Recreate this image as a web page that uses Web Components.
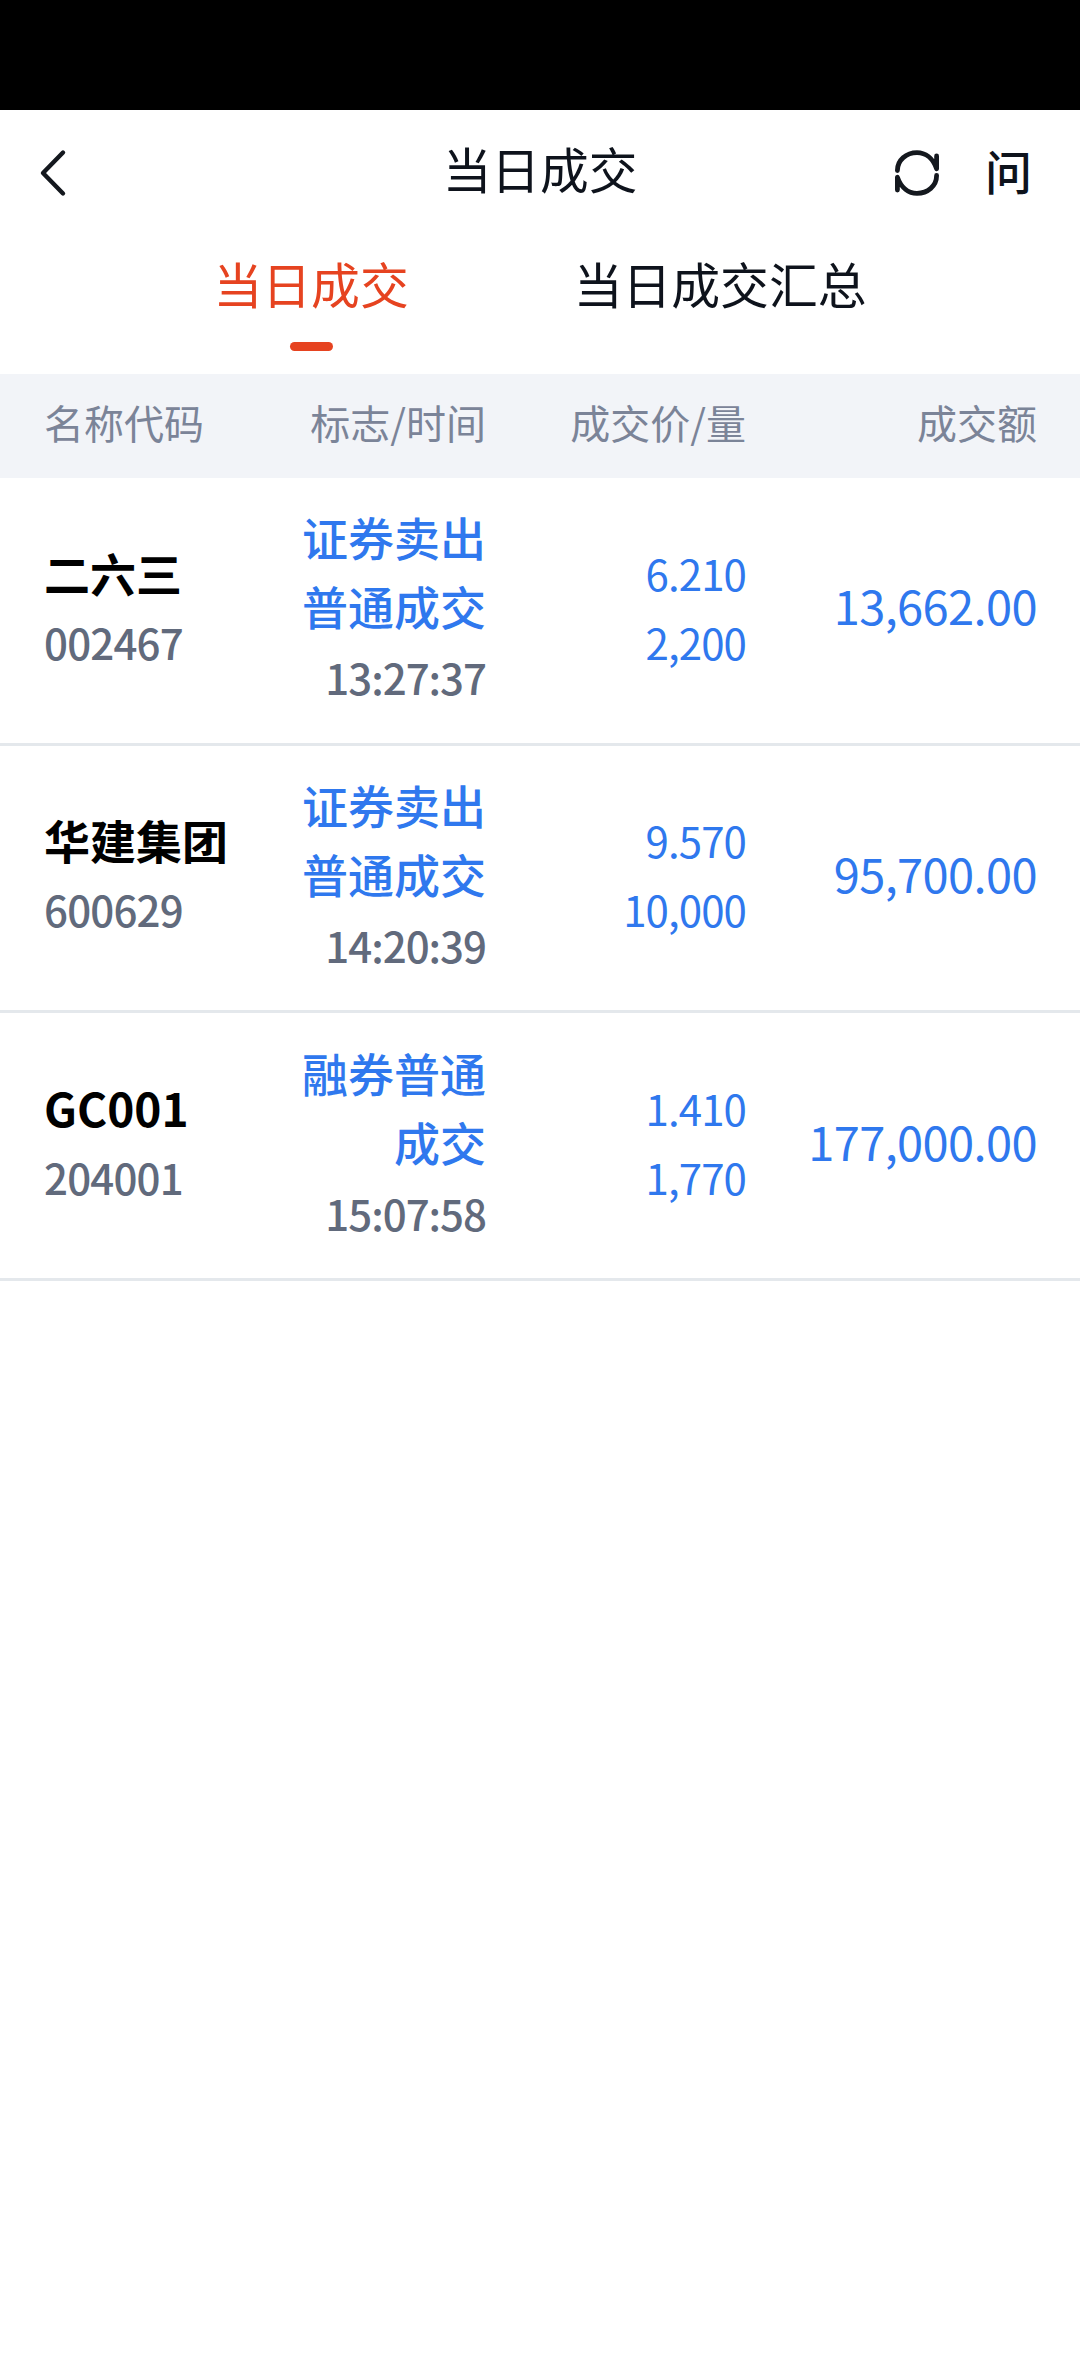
<!DOCTYPE html>
<html lang="zh-CN">
<head>
<meta charset="utf-8">
<title>当日成交</title>
<style>
  body {
    margin: 0;
    min-height: 2376px;
    background: #ffffff;
    color: #0e131c;
    font-family: "Noto Sans CJK SC", sans-serif;
    --brand: #e64320;
    --sell: #2f78ee;
    --muted: #7b8498;
    --code: #616a7c;
    --columns: 241px 201px 260px 291px;
  }
</style>
</head>
<body>

<status-bar></status-bar>

<nav-bar>
  当日成交
  <span slot="action">问</span>
</nav-bar>

<tab-bar>
  <tab-item active>当日成交</tab-item>
  <tab-item>当日成交汇总</tab-item>
</tab-bar>

<trade-list></trade-list>

<script>
/**
 * Status bar area
 */
class StatusBar extends HTMLElement {

  constructor() {
    super();
    this.attachShadow({mode: 'open'}).innerHTML = `
      <style>
        :host { display: block; height: 109.5px; background: #000000; }
      </style>
    `;
  }

}

/**
 * Title bar: back, title, refresh and a slotted action
 */
class NavBar extends HTMLElement {

  constructor() {
    super();
    this.attachShadow({mode: 'open'}).innerHTML = `
      <style>
        :host {
          display: grid;
          grid-template-columns: 1fr auto 1fr;
          align-items: center;
          height: 127px;
          padding: 0 48px 0 37px;
          box-sizing: border-box;
        }
        svg {
          display: block;
          fill: none;
          stroke: #14181e;
          stroke-width: 4.4;
          stroke-linecap: round;
          stroke-linejoin: round;
        }
        .refresh { stroke-width: 4.8; }
        h1 {
          margin: 0 0 11px 11px;
          font-size: 48.7px;
          line-height: 70px;
          font-weight: 400;
        }
        .actions {
          display: flex;
          justify-content: flex-end;
          align-items: center;
          gap: 44px;
        }
        ::slotted([slot=action]) {
          display: block;
          margin-bottom: 6px;
          font-size: 47px;
          line-height: 48px;
          font-weight: 500;
        }
      </style>
      <svg width="32" height="50" viewBox="0 0 32 50"><path d="M26 4.5 6 25l20 20.500"/></svg>
      <h1><slot></slot></h1>
      <div class="actions">
        <svg class="refresh" width="48" height="50" viewBox="0 0 48 50">
          <path d="M4.400 22.500C4.400 12 13.400 4.700 24 4.700c8.200 0 15.800 5.300 19.600 16V8"/>
          <path d="M43.600 27.500C43.600 38 34.600 45.300 24 45.300 15.800 45.300 8.200 40 4.400 29.300V42"/>
        </svg>
        <slot name="action"></slot>
      </div>
    `;
  }

}

/**
 * Tab bar
 */
class TabBar extends HTMLElement {

  constructor() {
    super();
    this.attachShadow({mode: 'open'}).innerHTML = `
      <style>
        :host {
          display: flex;
          justify-content: center;
          gap: 165px;
          height: 137.5px;
          padding-top: 10px;
          box-sizing: border-box;
        }
      </style>
      <slot></slot>
    `;
  }

}

class TabItem extends HTMLElement {

  constructor() {
    super();
    this.attachShadow({mode: 'open'}).innerHTML = `
      <style>
        :host {
          display: flex;
          flex-direction: column;
          align-items: center;
          gap: 23px;
          font-size: 48.8px;
          line-height: 72px;
        }
        :host([active]) { color: var(--brand); }
        :host([active])::after {
          content: '';
          width: 43px;
          height: 9px;
          border-radius: 5px;
          background: var(--brand);
        }
      </style>
      <slot></slot>
    `;
  }

}

/**
 * One executed trade
 */
class TradeRow extends HTMLElement {

  /**
   *
   * @param {{name: string, code: string, flag: string, time: string, price: string, volume: string, amount: string}} trade
   */
  constructor(trade) {
    super();
    this.attachShadow({mode: 'open'}).innerHTML = `
      <style>
        :host {
          display: grid;
          grid-template-columns: var(--columns);
          align-items: center;
          height: 267.67px;
          padding: 24px 43px 31px 44px;
          border-bottom: 3px solid #e4e8ec;
          box-sizing: border-box;
          font-size: 42px;
          line-height: 69px;
          text-align: right;
          color: var(--sell);
        }
        .name {
          text-align: left;
          color: var(--code);
          font-weight: 500;
          letter-spacing: -0.8px;
        }
        .name b {
          display: block;
          color: #000000;
          font-size: 46px;
          font-weight: 700;
          letter-spacing: 0;
        }
        .flag { padding-left: 12px; font-size: 46px; font-weight: 500; }
        .flag time {
          display: block;
          margin-top: 2px;
          font-size: 42px;
          letter-spacing: -1px;
          color: var(--code);
        }
        .price { letter-spacing: -0.9px; }
        .price div { height: 69px; }
        .amount { margin-top: -4px; font-size: 47px; letter-spacing: -0.6px; }
      </style>
      <div class="name"><b>${trade.name}</b>${trade.code}</div>
      <div class="flag">${trade.flag}<time>${trade.time}</time></div>
      <div class="price"><div>${trade.price}</div><div>${trade.volume}</div></div>
      <div class="amount">${trade.amount}</div>
    `;
  }

}

/**
 * Trade table with its column headings
 */
class TradeList extends HTMLElement {

  trades = [
    {name: '二六三', code: '002467', flag: '证券卖出普通成交', time: '13:27:37', price: '6.210', volume: '2,200', amount: '13,662.00'},
    {name: '华建集团', code: '600629', flag: '证券卖出普通成交', time: '14:20:39', price: '9.570', volume: '10,000', amount: '95,700.00'},
    {name: 'GC001', code: '204001', flag: '融券普通成交', time: '15:07:58', price: '1.410', volume: '1,770', amount: '177,000.00'}
  ];

  constructor() {
    super();
    this.attachShadow({mode: 'open'}).innerHTML = `
      <style>
        :host { display: block; }
        header {
          display: grid;
          grid-template-columns: var(--columns);
          align-items: center;
          height: 104px;
          padding: 0 43px 9px 44px;
          box-sizing: border-box;
          background: #f2f4f8;
          color: var(--muted);
          font-size: 40px;
          text-align: right;
        }
        header :first-child { text-align: left; }
      </style>
      <header>
        <span>名称代码</span>
        <span>标志/时间</span>
        <span>成交价/量</span>
        <span>成交额</span>
      </header>
    `;
  }

  connectedCallback() {
    this.shadowRoot.append(...this.trades.map(trade => new TradeRow(trade)));
  }

}

customElements.define('status-bar', StatusBar);
customElements.define('nav-bar', NavBar);
customElements.define('tab-bar', TabBar);
customElements.define('tab-item', TabItem);
customElements.define('trade-row', TradeRow);
customElements.define('trade-list', TradeList);
</script>
</body>
</html>
